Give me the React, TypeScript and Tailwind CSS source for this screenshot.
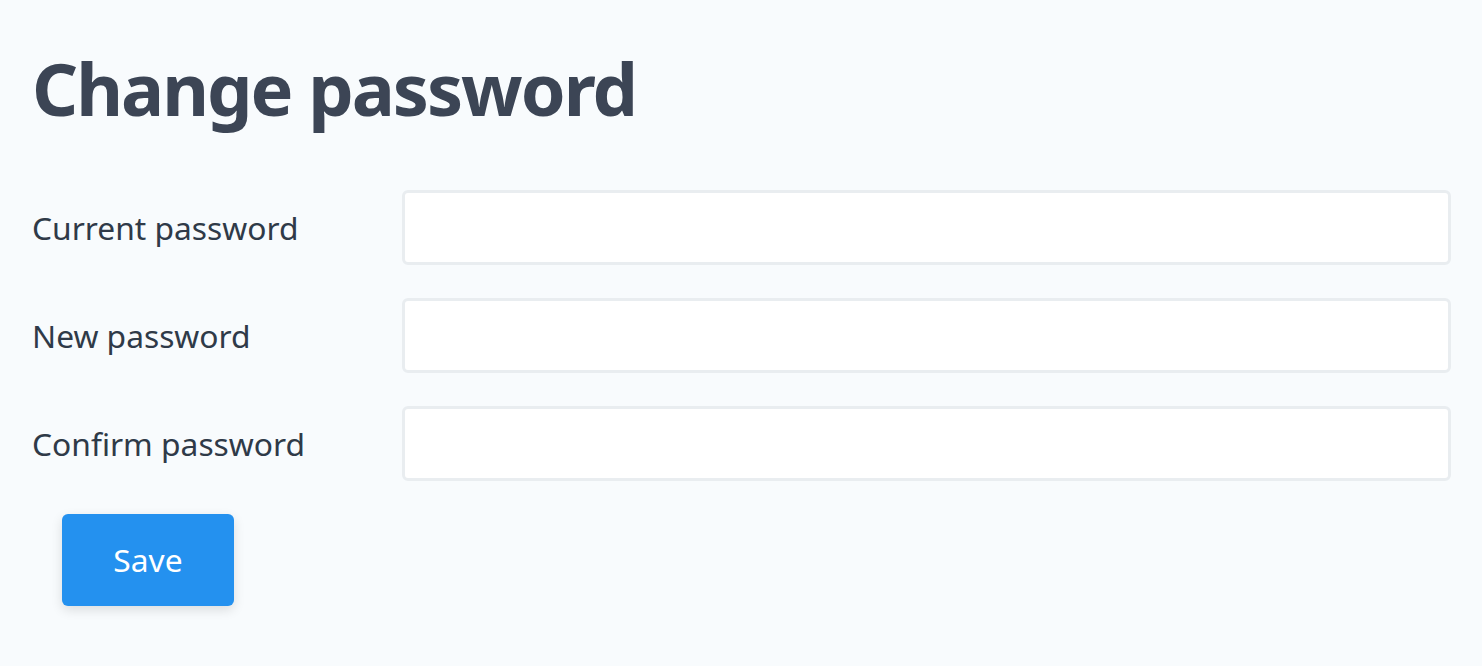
import React from 'react';

const fields = [
  { name: 'current', label: 'Current password' },
  { name: 'new', label: 'New password' },
  { name: 'confirm', label: 'Confirm password' },
];

const App = () => {
  return (
    <div
      className="min-h-[666px] w-full bg-[#f8fbfd] pl-8 pr-[31px] pt-[38px] text-[#2f3a48]"
      style={{ fontFamily: '"Noto Sans", "Open Sans", sans-serif' }}
    >
      <h1 className="text-[72px] font-bold leading-[100px] tracking-[-2px] text-[#3c4555]">
        Change password
      </h1>

      <form className="mt-[52px] flex flex-col gap-[33px]" onSubmit={(e) => e.preventDefault()}>
        {fields.map((f) => (
          <div key={f.name} className="flex items-center">
            <label htmlFor={f.name} className="w-[370px] shrink-0 text-[31.75px]">
              {f.label}
            </label>
            <input
              id={f.name}
              type="password"
              className="h-[75px] flex-1 rounded-md border-[3px] border-[#e9edf0] bg-white px-4 outline-none"
            />
          </div>
        ))}
        <div className="pl-[30px]">
          <button
            type="submit"
            className="h-[92px] w-[172px] rounded-md bg-[#2491ef] text-[31.75px] text-white shadow-[0_4px_12px_rgba(0,0,0,0.12)]"
          >
            Save
          </button>
        </div>
      </form>
    </div>
  );
};

export default App;
